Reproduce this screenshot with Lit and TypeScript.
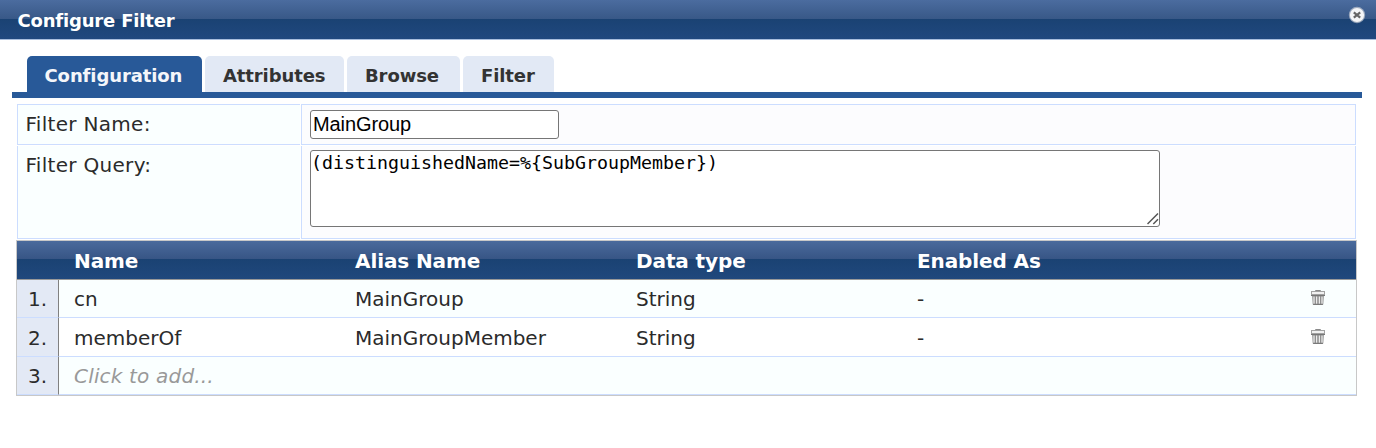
import { LitElement, html, css } from "lit";
import { customElement } from "lit/decorators.js";

const closeIcon = html`<svg class="close" width="18" height="18" viewBox="0 0 18 18">
  <circle cx="9" cy="9" r="8.2" fill="#b9c0cc" fill-opacity=".75"/>
  <circle cx="9" cy="9" r="7.1" fill="#f4f5f7"/>
  <path d="M5.8 6.4L12.2 11.6M12.2 6.4L5.8 11.6" stroke="#666" stroke-width="2.2"/>
</svg>`;

const trashIcon = html`<svg class="trash" width="14" height="15" viewBox="0 0 14 15">
  <path d="M4.5 1.2V.5h5v.7" fill="none" stroke="#8a8a8a"/>
  <path d="M0 1h14v4H0z" fill="#a2a2a2"/>
  <path d="M1 2h12v2H1z" fill="#f1f1f1"/>
  <path d="M0 5h14v1H0z" fill="#777"/>
  <path d="M1.2 6h11.6l-.5 8q0 1-1 1H2.7q-1 0-1-1z" fill="#8c8c8c"/>
  <path d="M3 6.5v7.3M5.6 6.5v7.3M8.4 6.5v7.3M11 6.5v7.3" stroke="#ececec" stroke-width="1.3"/>
  <path d="M2.3 14.4h9.4" stroke="#777"/>
</svg>`;

const gripIcon = html`<svg class="grip" width="12" height="12" viewBox="0 0 12 12">
  <path d="M.5 11L11 .5M6.3 11L11 6.3" stroke="#555" stroke-width="1.5"/>
</svg>`;

@customElement("app-root")
export class AppRoot extends LitElement {
  static styles = css`
    :host {
      display: block;
      height: 448px;
      overflow: hidden;
      background: #fff;
      color: #2b2b2b;
      font: 20px/24px Verdana, "DejaVu Sans", sans-serif;
    }
    * { box-sizing: border-box; }
    .title {
      display: flex;
      justify-content: space-between;
      height: 40px;
      padding: 6px 10px 0 17.5px;
      border-bottom: 1px solid #a9bede;
      background: linear-gradient(#4b6c9f 0, #385887 19px, #1a4273 19px, #20487f 39px);
      color: #fff;
      font-size: 18px;
      line-height: 30px;
      font-weight: bold;
    }
    .title span { letter-spacing: -0.18px; }
    .close { flex: none; }
    .tabs {
      display: flex;
      gap: 3px;
      margin: 16px 14px 0 12px;
      padding-left: 15px;
      border-bottom: 6px solid #285998;
    }
    .tab {
      height: 36px;
      border-radius: 5px 5px 0 0;
      background: #e2e9f5;
      color: #333;
      font-size: 18px;
      line-height: 39px;
      font-weight: bold;
      letter-spacing: -0.1px;
      padding-left: 18px;
      white-space: nowrap;
    }
    .tab.active { background: #285998; color: #f4f6fa; padding-left: 17.5px; }
    .w1 { width: 175px; } .w2 { width: 139px; } .w3 { width: 113px; } .w4 { width: 91px; }
    .form { margin: 6px 20px 0 17px; }
    .line { display: grid; grid-template-columns: 283px 1fr; column-gap: 1px; }
    .line > div { border: 1px solid #ccddff; border-right: 0; }
    .line .field { border-right: 1px solid #ccddff; background: #fcfcfe; padding: 5px 8px; }
    .line .label { background: #faffff; padding: 7px 8px 7px 7.5px; letter-spacing: 0.3px; }
    .line.first { height: 41px; }
    .line.second { height: 93px; margin-top: 1px; }
    .line.second > div { border-top: 0; }
    .line.second .field { padding-top: 4px; }
    .area { position: relative; width: 850px; }
    .grip { position: absolute; right: 1px; bottom: 2px; }
    input, textarea {
      display: block;
      margin: 0;
      border: 1px solid #767676;
      border-radius: 3px;
      background: #fff;
      color: #000;
      outline: 0;
    }
    input { width: 249px; height: 29px; padding: 1px 2px; font: 20px "Liberation Sans", Arial, sans-serif; letter-spacing: -0.1px; }
    textarea {
      width: 850px;
      height: 77px;
      padding: 0;
      font: 18.27px/24px "DejaVu Sans Mono", monospace;
      resize: none;
    }
    .grid { margin: 1px 19px 0 16px; border: 1px solid #c8c8c8; }
    .row {
      display: grid;
      grid-template-columns: 42px 281px 281px 281px 1fr 78px;
      grid-template-rows: 100%;
      height: 38px;
      line-height: 38px;
    }
    .row > div { border-bottom: 1px solid #ccddff; padding-left: 15px; white-space: nowrap; }
    .row > .num { background: #e3e9f5; border-right: 1px solid #808080; padding: 0 11px 0 0; text-align: right; }
    .row.odd { background: #faffff; }
    .row.tall { height: 39px; line-height: 40px; }
    .row.head {
      height: 39px;
      line-height: 40px;
      border-bottom: 1px solid #999;
      background: linear-gradient(#4a6a9c 0, #375585 18px, #1a4273 18px, #20487d 38px);
      color: #fff;
      font-weight: bold;
      letter-spacing: -0.1px;
    }
    .row.head > div { border: 0; }
    .row .icon { display: flex; padding: 10px 0 0 33px; }
    .row.tall .icon { padding-top: 11px; }
    .row .hint { font-style: italic; color: #999; letter-spacing: 0.18px; }
  `;

  private item(n: number, name: string, alias: string) {
    return html`<div class="row ${n % 2 ? "odd" : "tall"}">
      <div class="num">${n}.</div><div>${name}</div><div>${alias}</div>
      <div>String</div><div>-</div><div class="icon">${trashIcon}</div>
    </div>`;
  }

  render() {
    return html`
      <div class="title"><span>Configure Filter</span>${closeIcon}</div>
      <div class="tabs">
        <div class="tab w1 active">Configuration</div>
        <div class="tab w2">Attributes</div>
        <div class="tab w3">Browse</div>
        <div class="tab w4">Filter</div>
      </div>
      <div class="form">
        <div class="line first">
          <div class="label">Filter Name:</div>
          <div class="field"><input .value=${"MainGroup"} /></div>
        </div>
        <div class="line second">
          <div class="label">Filter Query:</div>
          <div class="field">
            <div class="area">
              <textarea spellcheck="false" .value=${"(distinguishedName=%{SubGroupMember})"}></textarea>
              ${gripIcon}
            </div>
          </div>
        </div>
      </div>
      <div class="grid">
        <div class="row head">
          <div></div><div>Name</div><div>Alias Name</div><div>Data type</div><div>Enabled As</div><div></div>
        </div>
        ${this.item(1, "cn", "MainGroup")}
        ${this.item(2, "memberOf", "MainGroupMember")}
        <div class="row odd">
          <div class="num">3.</div><div class="hint">Click to add...</div><div></div><div></div><div></div><div></div>
        </div>
      </div>`;
  }
}
